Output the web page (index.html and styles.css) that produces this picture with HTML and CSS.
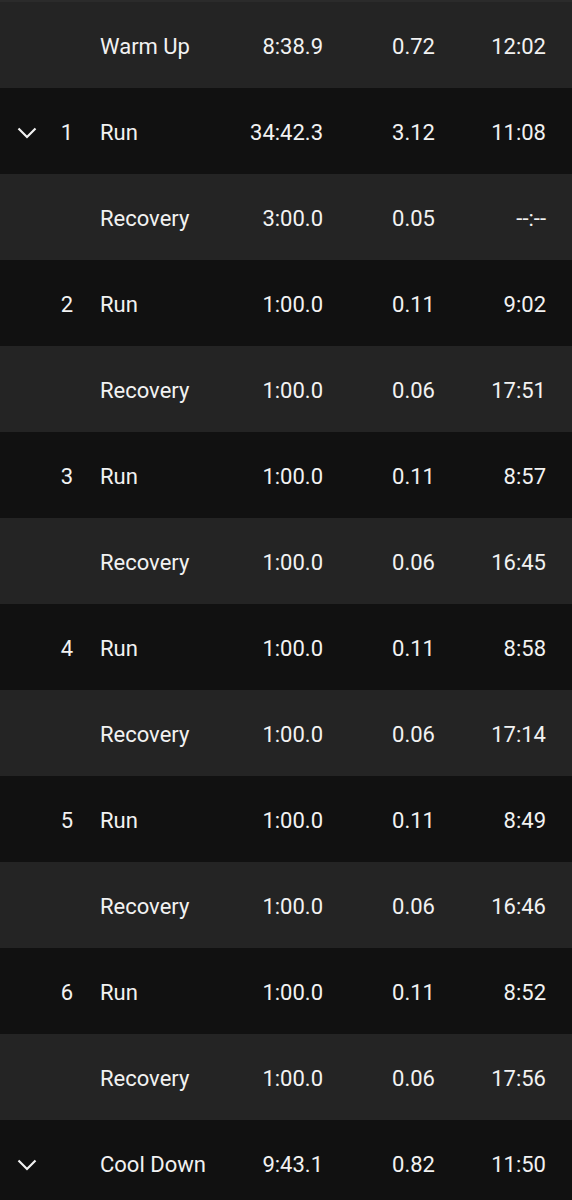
FILE: index.html
```html
<!DOCTYPE html>
<html lang="en">
<head>
    <meta charset="UTF-8">
    <meta name="viewport" content="width=device-width, initial-scale=1.0">
    <title>Workout Laps</title>
    <link rel="stylesheet" href="styles.css">
</head>
<body>

    <div class="laps">
        <div class="lap light">
            <span class="toggle"></span>
            <span class="num"></span>
            <span class="name">Warm Up</span>
            <span class="val">8:38.9</span>
            <span class="val">0.72</span>
            <span class="val">12:02</span>
        </div>
        <div class="lap dark">
            <span class="toggle">
                <svg class="chevron" viewBox="0 0 20 12"><polyline points="1.5,1.5 10,10 18.5,1.5" /></svg>
            </span>
            <span class="num">1</span>
            <span class="name">Run</span>
            <span class="val">34:42.3</span>
            <span class="val">3.12</span>
            <span class="val">11:08</span>
        </div>
        <div class="lap light">
            <span class="toggle"></span>
            <span class="num"></span>
            <span class="name">Recovery</span>
            <span class="val">3:00.0</span>
            <span class="val">0.05</span>
            <span class="val">--:--</span>
        </div>
        <div class="lap dark">
            <span class="toggle"></span>
            <span class="num">2</span>
            <span class="name">Run</span>
            <span class="val">1:00.0</span>
            <span class="val">0.11</span>
            <span class="val">9:02</span>
        </div>
        <div class="lap light">
            <span class="toggle"></span>
            <span class="num"></span>
            <span class="name">Recovery</span>
            <span class="val">1:00.0</span>
            <span class="val">0.06</span>
            <span class="val">17:51</span>
        </div>
        <div class="lap dark">
            <span class="toggle"></span>
            <span class="num">3</span>
            <span class="name">Run</span>
            <span class="val">1:00.0</span>
            <span class="val">0.11</span>
            <span class="val">8:57</span>
        </div>
        <div class="lap light">
            <span class="toggle"></span>
            <span class="num"></span>
            <span class="name">Recovery</span>
            <span class="val">1:00.0</span>
            <span class="val">0.06</span>
            <span class="val">16:45</span>
        </div>
        <div class="lap dark">
            <span class="toggle"></span>
            <span class="num">4</span>
            <span class="name">Run</span>
            <span class="val">1:00.0</span>
            <span class="val">0.11</span>
            <span class="val">8:58</span>
        </div>
        <div class="lap light">
            <span class="toggle"></span>
            <span class="num"></span>
            <span class="name">Recovery</span>
            <span class="val">1:00.0</span>
            <span class="val">0.06</span>
            <span class="val">17:14</span>
        </div>
        <div class="lap dark">
            <span class="toggle"></span>
            <span class="num">5</span>
            <span class="name">Run</span>
            <span class="val">1:00.0</span>
            <span class="val">0.11</span>
            <span class="val">8:49</span>
        </div>
        <div class="lap light">
            <span class="toggle"></span>
            <span class="num"></span>
            <span class="name">Recovery</span>
            <span class="val">1:00.0</span>
            <span class="val">0.06</span>
            <span class="val">16:46</span>
        </div>
        <div class="lap dark">
            <span class="toggle"></span>
            <span class="num">6</span>
            <span class="name">Run</span>
            <span class="val">1:00.0</span>
            <span class="val">0.11</span>
            <span class="val">8:52</span>
        </div>
        <div class="lap light">
            <span class="toggle"></span>
            <span class="num"></span>
            <span class="name">Recovery</span>
            <span class="val">1:00.0</span>
            <span class="val">0.06</span>
            <span class="val">17:56</span>
        </div>
        <div class="lap dark">
            <span class="toggle">
                <svg class="chevron" viewBox="0 0 20 12"><polyline points="1.5,1.5 10,10 18.5,1.5" /></svg>
            </span>
            <span class="num"></span>
            <span class="name">Cool Down</span>
            <span class="val">9:43.1</span>
            <span class="val">0.82</span>
            <span class="val">11:50</span>
        </div>
    </div>

</body>
</html>
```

FILE: styles.css
```css
body {
    margin: 0;
    background-color: #111111;
    font-family: Roboto, 'Liberation Sans', sans-serif;
    color: #f2f2f2;
}
.laps {
    border-top: 2px solid #2b2b2b;
}
.lap {
    box-sizing: border-box;
    display: grid;
    grid-template-columns: 54px 26px 1fr 110px 112px 111px;
    padding: 3px 26px 0 0;
    height: 86px;
    align-items: center;
    font-size: 22px;
}
.light {
    background-color: #242424;
}
.dark {
    background-color: #111111;
}
.toggle {
    display: flex;
    justify-content: center;
    align-items: center;
}
.chevron {
    width: 20px;
    height: 12px;
    fill: none;
    stroke: #f2f2f2;
    stroke-width: 2.2;
}
.num {
    text-align: center;
}
.name {
    padding-left: 20px;
}
.val {
    text-align: right;
}
```
